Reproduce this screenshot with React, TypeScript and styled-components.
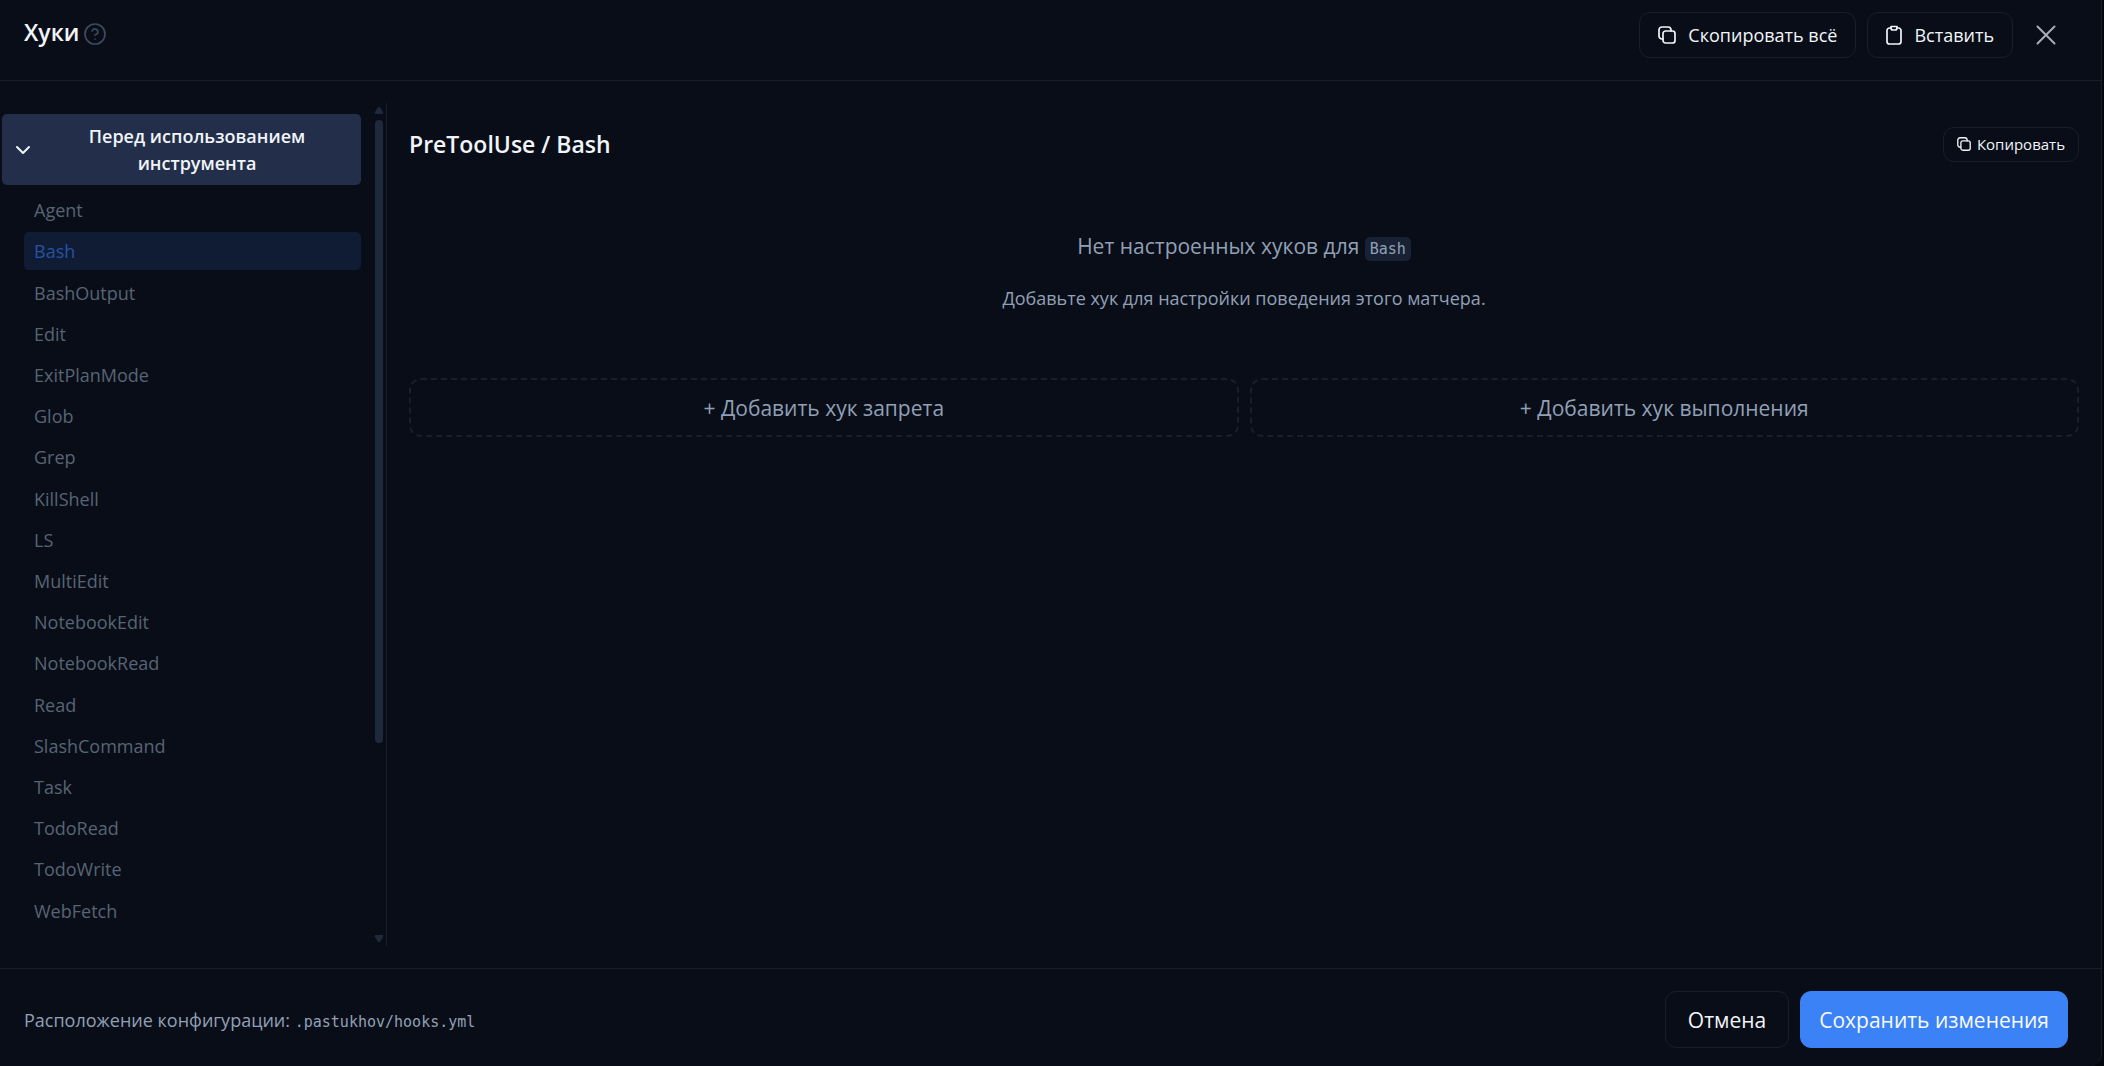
import React, { useState } from "react";
import styled, { createGlobalStyle } from "styled-components";
import { ChevronDown, CircleHelp } from "lucide-react";

const c = {
  bg: "#090d18",
  line: "#191e29",
  text: "#f1f5f9",
  muted: "#91a0b6",
  dim: "#586474",
  thumb: "#1e293b",
  blue: "#3b82f6",
};

const Global = createGlobalStyle`
  *, *::before, *::after { box-sizing: border-box; }
  html, body { margin: 0; background: #03060d; }
  body, button { font-family: "Open Sans", "Noto Sans", sans-serif; }
`;

const Dialog = styled.section`
  display: flex;
  flex-direction: column;
  height: 100vh;
  margin-right: 2px;
  background: ${c.bg};
  color: ${c.text};
  border-right: 1px solid ${c.line};
  border-bottom-right-radius: 12px;
  overflow: hidden;
`;

const Header = styled.header`
  display: flex;
  justify-content: space-between;
  align-items: flex-start;
  height: 81px;
  flex-shrink: 0;
  padding: 12px 45px 0 24px;
  border-bottom: 1px solid ${c.line};
`;

const TitleRow = styled.div`
  display: flex;
  align-items: flex-end;
  gap: 4px;
  padding-top: 6px;
`;

const Title = styled.h1`
  margin: 0;
  font-size: 23px;
  line-height: 28px;
  font-weight: 600;
`;

const IconButton = styled.button<{ $color: string }>`
  display: flex;
  padding: 0;
  border: 0;
  background: none;
  color: ${(p) => p.$color};
  cursor: pointer;
`;

const Actions = styled.div`
  display: flex;
  align-items: center;
  gap: 11px;
`;

const CloseButton = styled(IconButton)`
  margin-left: 12px;
`;

const OutlineButton = styled.button<{ $size: "sm" | "md" | "lg" }>`
  display: flex;
  align-items: center;
  justify-content: center;
  gap: ${(p) => (p.$size === "sm" ? 6 : 12)}px;
  height: ${(p) => ({ sm: 35, md: 46, lg: 57 })[p.$size]}px;
  padding: 0 ${(p) => ({ sm: 13, md: 18, lg: 22 })[p.$size]}px;
  border: 1px solid ${c.line};
  border-radius: 11px;
  background: ${c.bg};
  color: ${c.text};
  font-size: ${(p) => ({ sm: 15, md: 18, lg: 21 })[p.$size]}px;
  white-space: nowrap;
  cursor: pointer;
`;

const SaveButton = styled(OutlineButton)`
  padding: 0 18px;
  border-color: ${c.blue};
  background: ${c.blue};
  color: #f8fafc;
`;

const Body = styled.div`
  display: flex;
  flex: 1;
  min-height: 0;
  padding: 22px 22px 22px 0;
`;

const Sidebar = styled.aside`
  display: flex;
  width: 387px;
  flex-shrink: 0;
  border-right: 1px solid ${c.line};
`;

const SideScroll = styled.nav`
  flex: 1;
  min-width: 0;
  margin-bottom: 2px;
  padding: 11px 14px 0 2px;
  overflow-y: auto;
  scrollbar-width: none;
`;

const GroupButton = styled.button`
  display: flex;
  align-items: center;
  width: 100%;
  padding: 9px 2px 8px 9px;
  border: 0;
  border-radius: 5px;
  background: #232f4a;
  color: ${c.text};
  cursor: pointer;
`;

const GroupLabel = styled.span`
  flex: 1;
  padding: 0 24px;
  font-size: 18px;
  line-height: 27px;
  font-weight: 600;
`;

const Matchers = styled.ul`
  display: grid;
  grid-auto-rows: 1fr;
  gap: 3px;
  min-height: 780px;
  margin: 6px 0 0;
  padding: 0 0 0 22px;
  list-style: none;
`;

const Matcher = styled.button<{ $active: boolean }>`
  display: block;
  width: 100%;
  height: 100%;
  padding: 0 10px;
  border: 0;
  border-radius: 5px;
  background: ${(p) => (p.$active ? "#101c34" : "none")};
  color: ${(p) => (p.$active ? "#2553a3" : c.dim)};
  font-size: 18px;
  line-height: 24px;
  text-align: left;
  cursor: pointer;
`;

const ScrollRail = styled.div`
  display: flex;
  flex-direction: column;
  align-items: center;
  gap: 6px;
  width: 8px;
  margin-right: 3px;
  padding: 4px 0;
`;

const ScrollTrack = styled.div`
  flex: 1;
  width: 8px;
`;

const ScrollThumb = styled.div`
  height: 77%;
  border-radius: 4px;
  background: ${c.thumb};
`;

const Main = styled.main`
  flex: 1;
  min-width: 0;
  padding: 22px 0 0 22px;
`;

const MainHead = styled.div`
  display: flex;
  align-items: center;
  justify-content: space-between;
`;

const Heading = styled.h2`
  margin: 0;
  font-size: 23px;
  line-height: 38px;
  font-weight: 600;
`;

const Empty = styled.div`
  padding: 66px 0;
  color: ${c.muted};
  text-align: center;
`;

const EmptyTitle = styled.p`
  margin: 0 0 18px;
  font-size: 21px;
  line-height: 34px;
`;

const EmptyHint = styled.p`
  margin: 0;
  font-size: 18px;
  line-height: 28px;
`;

const Mono = styled.code<{ $chip?: boolean }>`
  padding: ${(p) => (p.$chip ? "3px 5px" : "0")};
  border-radius: 5px;
  background: ${(p) => (p.$chip ? "#182234" : "none")};
  font-family: "DejaVu Sans Mono", monospace;
  font-size: 15px;
`;

const AddRow = styled.div`
  display: grid;
  grid-template-columns: 1fr 1fr;
  gap: 11px;
`;

const AddButton = styled.button`
  height: 59px;
  border: 2px dashed ${c.line};
  border-radius: 12px;
  background: none;
  color: ${c.muted};
  font-size: 21px;
  cursor: pointer;
`;

const Footer = styled.footer`
  display: flex;
  align-items: center;
  justify-content: space-between;
  height: 98px;
  flex-shrink: 0;
  padding: 4px 33px 0 24px;
  border-top: 1px solid ${c.line};
`;

const ConfigPath = styled.p`
  margin: 0;
  color: ${c.muted};
  font-size: 18px;
`;

const stroke = {
  fill: "none",
  stroke: "currentColor",
  strokeLinecap: "round" as const,
  strokeLinejoin: "round" as const,
  "aria-hidden": true,
};

const CopyIcon = ({ size }: { size: number }) => (
  <svg width={size} height={size} viewBox="0 0 18 18" {...stroke} strokeWidth="1.7">
    <rect x="5" y="5" width="12" height="12" rx="2.5" />
    <path d="M5 13H4a3 3 0 0 1-3-3V4a3 3 0 0 1 3-3h6a3 3 0 0 1 3 3v1" />
  </svg>
);

const PasteIcon = () => (
  <svg width="16" height="20" viewBox="1 0 16 20" {...stroke} strokeWidth="1.7">
    <path d="M6 3H4.500a2.500 2.500 0 0 0-2.500 2.500v11A2.500 2.500 0 0 0 4.500 19h9a2.500 2.500 0 0 0 2.500-2.500v-11A2.500 2.500 0 0 0 13.500 3H12" />
    <path d="M6 1.500h6V3a2 2 0 0 1-2 2H8a2 2 0 0 1-2-2z" />
  </svg>
);

const CloseIcon = () => (
  <svg width="20" height="20" viewBox="0 0 20 20" {...stroke} strokeWidth="2">
    <path d="M1.500 1.500l17 17M18.500 1.500l-17 17" />
  </svg>
);

const ArrowIcon = ({ down }: { down?: boolean }) => (
  <svg width="8" height="7" viewBox="0 0 8 7" fill={c.thumb} aria-hidden>
    <path d={down ? "M0 0h8v2L5 7H3L0 2z" : "M0 7h8V5L5 0H3L0 5z"} />
  </svg>
);

const matchers = [
  "Agent", "Bash", "BashOutput", "Edit", "ExitPlanMode", "Glob", "Grep",
  "KillShell", "LS", "MultiEdit", "NotebookEdit", "NotebookRead", "Read",
  "SlashCommand", "Task", "TodoRead", "TodoWrite", "WebFetch", "WebSearch",
];

export default function App() {
  const [active, setActive] = useState("Bash");

  return (
    <>
      <Global />
      <Dialog role="dialog" aria-labelledby="hooks-title">
        <Header>
          <TitleRow>
            <Title id="hooks-title">Хуки</Title>
            <IconButton $color="#3d4a5e" type="button" aria-label="Справка">
              <CircleHelp size={24} strokeWidth={1.7} />
            </IconButton>
          </TitleRow>
          <Actions>
            <OutlineButton $size="md" type="button">
              <CopyIcon size={18} />
              Скопировать всё
            </OutlineButton>
            <OutlineButton $size="md" type="button">
              <PasteIcon />
              Вставить
            </OutlineButton>
            <CloseButton $color="#a9adb4" type="button" aria-label="Закрыть">
              <CloseIcon />
            </CloseButton>
          </Actions>
        </Header>

        <Body>
          <Sidebar>
            <SideScroll>
              <GroupButton type="button" aria-expanded="true">
                <ChevronDown size={24} strokeWidth={2} />
                <GroupLabel>Перед использованием инструмента</GroupLabel>
              </GroupButton>
              <Matchers>
                {matchers.map((name) => (
                  <li key={name}>
                    <Matcher type="button" $active={name === active} onClick={() => setActive(name)}>
                      {name}
                    </Matcher>
                  </li>
                ))}
              </Matchers>
            </SideScroll>
            <ScrollRail aria-hidden>
              <ArrowIcon />
              <ScrollTrack>
                <ScrollThumb />
              </ScrollTrack>
              <ArrowIcon down />
            </ScrollRail>
          </Sidebar>

          <Main>
            <MainHead>
              <Heading>PreToolUse / {active}</Heading>
              <OutlineButton $size="sm" type="button">
                <CopyIcon size={14} />
                Копировать
              </OutlineButton>
            </MainHead>
            <Empty>
              <EmptyTitle>
                Нет настроенных хуков для <Mono $chip>{active}</Mono>
              </EmptyTitle>
              <EmptyHint>Добавьте хук для настройки поведения этого матчера.</EmptyHint>
            </Empty>
            <AddRow>
              <AddButton type="button">+ Добавить хук запрета</AddButton>
              <AddButton type="button">+ Добавить хук выполнения</AddButton>
            </AddRow>
          </Main>
        </Body>

        <Footer>
          <ConfigPath>
            Расположение конфигурации: <Mono>.pastukhov/hooks.yml</Mono>
          </ConfigPath>
          <Actions>
            <OutlineButton $size="lg" type="button">Отмена</OutlineButton>
            <SaveButton $size="lg" type="button">Сохранить изменения</SaveButton>
          </Actions>
        </Footer>
      </Dialog>
    </>
  );
}
